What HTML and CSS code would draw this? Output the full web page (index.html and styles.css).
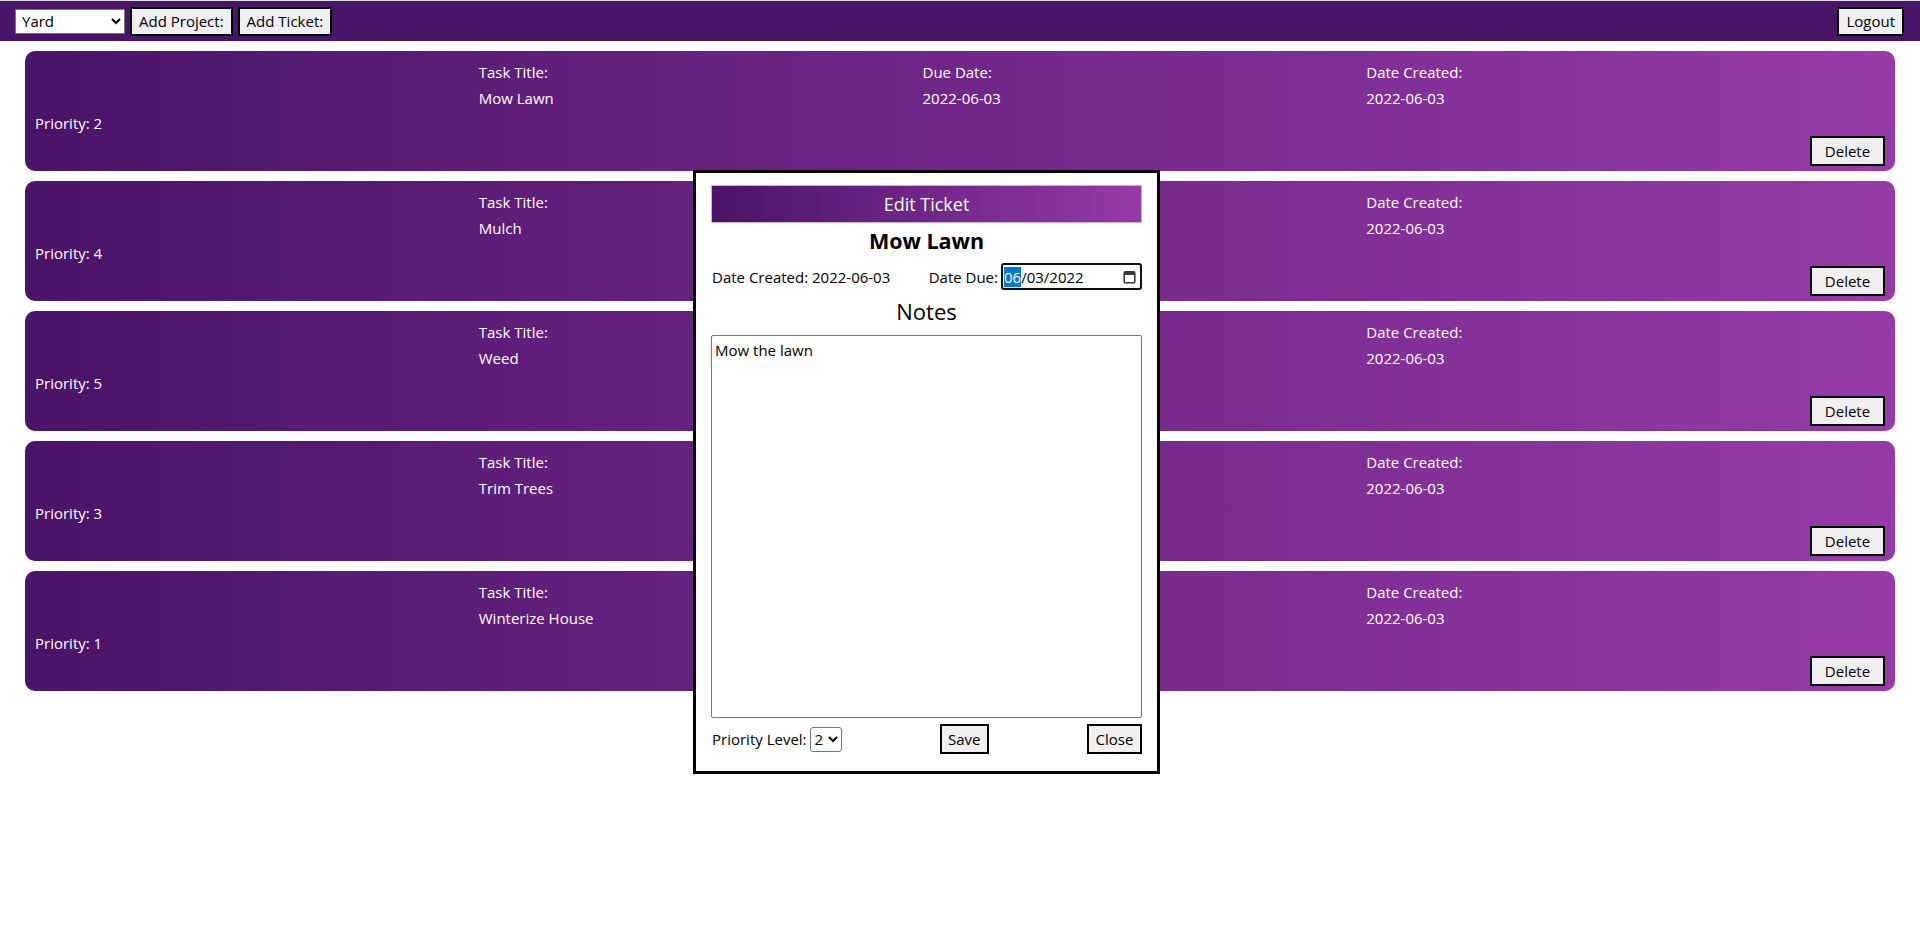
FILE: index.html
```html
<!DOCTYPE html>
<html lang="en">
<head>
<meta charset="utf-8">
<title>Tickets</title>
<link rel="stylesheet" href="styles.css">
</head>
<body>
<header class="topbar">
  <div class="topbar-left">
    <select class="project-select">
      <option>Yard</option>
      <option>House</option>
    </select>
    <button class="btn btn-top">Add Project:</button>
    <button class="btn btn-top">Add Ticket:</button>
  </div>
  <button class="btn btn-top">Logout</button>
</header>

<main class="tickets">
  <div class="card">
    <div class="col col-priority">Priority: 2</div>
    <div class="col"><div>Task Title:</div><div class="val">Mow Lawn</div></div>
    <div class="col"><div>Due Date:</div><div class="val">2022-06-03</div></div>
    <div class="col"><div>Date Created:</div><div class="val">2022-06-03</div></div>
    <button class="btn btn-delete">Delete</button>
  </div>
  <div class="card">
    <div class="col col-priority">Priority: 4</div>
    <div class="col"><div>Task Title:</div><div class="val">Mulch</div></div>
    <div class="col"><div>Due Date:</div><div class="val">2022-06-03</div></div>
    <div class="col"><div>Date Created:</div><div class="val">2022-06-03</div></div>
    <button class="btn btn-delete">Delete</button>
  </div>
  <div class="card">
    <div class="col col-priority">Priority: 5</div>
    <div class="col"><div>Task Title:</div><div class="val">Weed</div></div>
    <div class="col"><div>Due Date:</div><div class="val">2022-06-03</div></div>
    <div class="col"><div>Date Created:</div><div class="val">2022-06-03</div></div>
    <button class="btn btn-delete">Delete</button>
  </div>
  <div class="card">
    <div class="col col-priority">Priority: 3</div>
    <div class="col"><div>Task Title:</div><div class="val">Trim Trees</div></div>
    <div class="col"><div>Due Date:</div><div class="val">2022-06-03</div></div>
    <div class="col"><div>Date Created:</div><div class="val">2022-06-03</div></div>
    <button class="btn btn-delete">Delete</button>
  </div>
  <div class="card">
    <div class="col col-priority">Priority: 1</div>
    <div class="col"><div>Task Title:</div><div class="val">Winterize House</div></div>
    <div class="col"><div>Due Date:</div><div class="val">2022-06-03</div></div>
    <div class="col"><div>Date Created:</div><div class="val">2022-06-03</div></div>
    <button class="btn btn-delete">Delete</button>
  </div>
</main>

<div class="modal">
  <div class="modal-title">Edit Ticket</div>
  <h2 class="ticket-name">Mow Lawn</h2>
  <div class="date-row">
    <span>Date Created: 2022-06-03</span>
    <span class="due">
      <span>Date Due:</span>
      <span class="date-input">
        <span class="date-text"><span class="seg-sel">06</span>/03/2022</span>
        <svg class="cal" width="13" height="14" viewBox="0 0 13 14" aria-hidden="true">
          <rect x="1.2" y="1.8" width="10.6" height="11" rx="1.4" fill="none" stroke="#3b3b3b" stroke-width="1.6"/>
          <rect x="1.2" y="1.8" width="10.6" height="3.2" fill="#3b3b3b"/>
        </svg>
      </span>
    </span>
  </div>
  <h3 class="notes-title">Notes</h3>
  <textarea class="notes">Mow the lawn</textarea>
  <div class="modal-foot">
    <span class="prio">
      <span>Priority Level:</span>
      <select class="prio-select">
        <option>1</option>
        <option selected>2</option>
        <option>3</option>
        <option>4</option>
        <option>5</option>
      </select>
    </span>
    <button class="btn btn-save">Save</button>
    <button class="btn btn-close">Close</button>
  </div>
</div>
</body>
</html>
```

FILE: styles.css
```css
* {
  box-sizing: border-box;
}

html, body {
  margin: 0;
  padding: 0;
  background: #ffffff;
}

body {
  font-family: "Open Sans", "Noto Sans", sans-serif;
  font-size: 15px;
  color: #000;
  position: relative;
  min-height: 942px;
}

.topbar {
  height: 41px;
  border-top: 1px solid #dedede;
  background: #4a1468;
  display: flex;
  align-items: center;
  justify-content: space-between;
  padding: 0 16px 0 15px;
}

.topbar-left {
  display: flex;
  align-items: center;
  gap: 5px;
}

.project-select {
  width: 110px;
  height: 25px;
  font-family: "Open Sans", "Noto Sans", sans-serif;
  font-size: 15px;
  background: #fff;
  border: 1px solid #767676;
  border-radius: 0;
  padding: 0 2px;
  color: #000;
}

.btn {
  font-family: "Open Sans", "Noto Sans", sans-serif;
  font-size: 15px;
  color: #000;
  background: #efefef;
  border: 2px solid #000;
  border-radius: 0;
  height: 29px;
  padding: 0 5px;
  line-height: 23px;
  cursor: pointer;
}

.btn-top {
  padding: 0 7px;
}

.tickets {
  padding: 10px 25px;
  display: flex;
  flex-direction: column;
  gap: 10px;
}

.card {
  height: 120px;
  border-radius: 10px;
  background: linear-gradient(to right, #4a1468, #963aa8);
  color: #fff;
  display: flex;
  padding: 9px 10px 5px 10px;
  line-height: 24px;
}

.col {
  flex: 1 1 0;
  min-width: 0;
}

.col-priority {
  padding-top: 51px;
}

.val {
  margin-top: 2px;
}

.btn-delete {
  align-self: flex-end;
  width: 75px;
  height: 30px;
  padding: 0;
}

.modal {
  position: absolute;
  left: 693px;
  top: 170px;
  width: 467px;
  height: 604px;
  background: #fff;
  border: 3px solid #000;
  padding: 12px 15px 16px 15px;
  display: flex;
  flex-direction: column;
}

.modal-title {
  height: 38px;
  background: linear-gradient(to right, #4a1468, #963aa8);
  border: 1px solid #cdb0da;
  color: #fff;
  font-size: 18px;
  line-height: 36px;
  text-align: center;
}

.ticket-name {
  margin: 0;
  font-size: 21.5px;
  font-weight: 700;
  line-height: 36px;
  text-align: center;
}

.date-row {
  margin-top: 4px;
  height: 27px;
  display: flex;
  align-items: center;
  justify-content: space-between;
  padding-left: 1px;
}

.due {
  display: flex;
  align-items: center;
  gap: 3px;
}

.date-input {
  width: 141px;
  height: 27px;
  border: 2px solid #101010;
  border-radius: 3px;
  display: flex;
  align-items: center;
  justify-content: space-between;
  padding: 0 4px 0 1px;
}

.date-text {
  line-height: 20px;
}

.seg-sel {
  background: #0078d7;
  color: #fff;
}

.cal {
  display: block;
}

.notes-title {
  margin: 5px 0 0 0;
  font-size: 22px;
  font-weight: 400;
  line-height: 32px;
  text-align: center;
}

.notes {
  margin-top: 8px;
  height: 383px;
  width: 100%;
  resize: none;
  border: 1px solid #767676;
  border-radius: 2px;
  padding: 2px 3px;
  font-family: "Open Sans", "Noto Sans", sans-serif;
  font-size: 15px;
  line-height: 24px;
  color: #000;
}

.modal-foot {
  margin-top: 6px;
  height: 30px;
  display: flex;
  align-items: center;
  justify-content: space-between;
  padding-left: 1px;
}

.prio {
  display: flex;
  align-items: center;
  gap: 3px;
}

.prio-select {
  width: 32px;
  height: 25px;
  font-family: "Open Sans", "Noto Sans", sans-serif;
  font-size: 15px;
  border: 1px solid #767676;
  border-radius: 3px;
  background: #fff;
  padding: 0;
  color: #000;
}

.btn-save {
  width: 49px;
  height: 30px;
  padding: 0;
}

.btn-close {
  width: 55px;
  height: 30px;
  padding: 0;
}
```
